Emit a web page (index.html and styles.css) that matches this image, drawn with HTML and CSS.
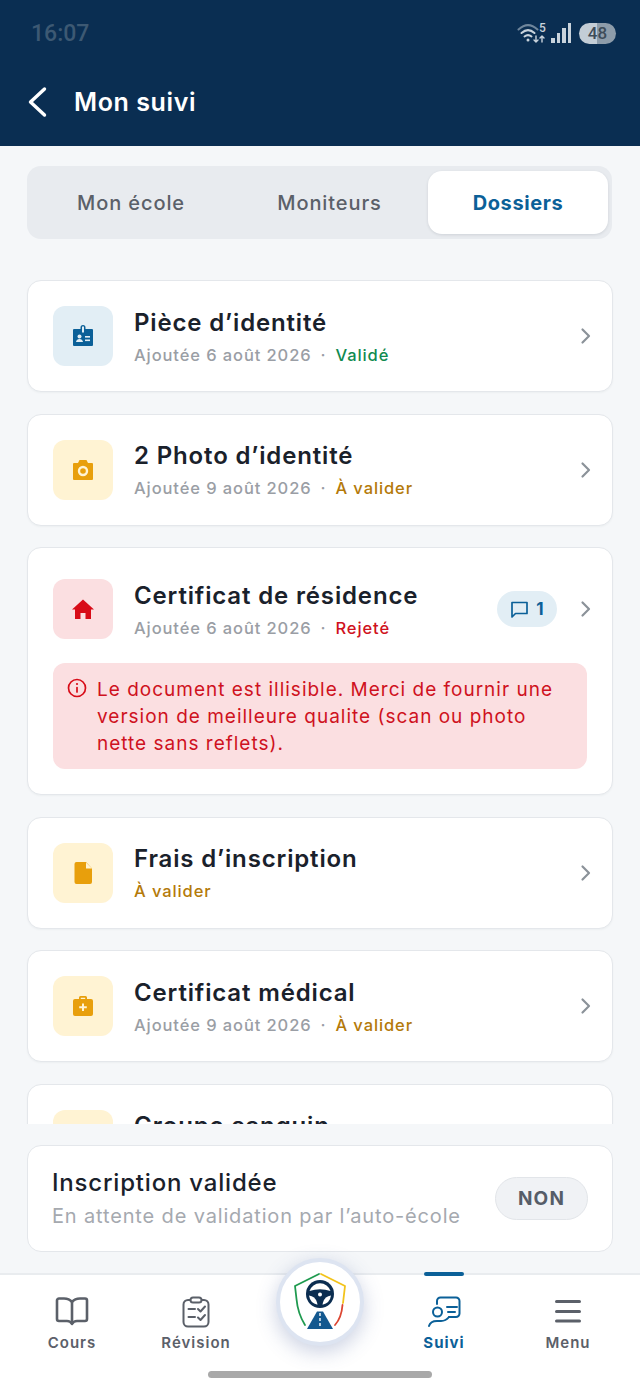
FILE: index.html
```html
<!DOCTYPE html>
<html lang="fr">
<head>
    <meta charset="UTF-8">
    <meta name="viewport" content="width=device-width, initial-scale=1.0">
    <title>Mon suivi</title>
    <link rel="stylesheet" href="styles.css">
</head>
<body>
<div class="app">
    <header class="header">
        <div class="status">
            <span class="time">16:07</span>
            <div class="status-icons">
                <svg width="30" height="22" viewBox="0 0 30 22" fill="none" stroke="#c9d3dc" stroke-linecap="round">
                    <path d="M1.500 7.500C8 1.500 14 1.500 20.500 7.500" stroke="#6f869c" stroke-width="2"/>
                    <path d="M4.500 11C9 7 13 7 17.500 11" stroke-width="2"/>
                    <path d="M7.500 14.500C10 12.500 12 12.500 14.500 14.500" stroke-width="2"/>
                    <circle cx="11" cy="18" r="1.500" fill="#c9d3dc" stroke="none"/>
                    <path d="M19 14v6M17 18l2 2 2-2M25 20v-6M23 16l2-2 2 2" stroke-width="1.400"/>
                    <text x="22" y="10" class="wifi-five">5</text>
                </svg>
                <div class="signal"><i></i><i></i><i></i><i></i></div>
                <div class="battery"><span>48</span></div>
            </div>
        </div>
        <div class="titlebar">
            <svg width="20" height="32" viewBox="0 0 20 32" fill="none" stroke="#fff" stroke-width="3.400" stroke-linecap="round" stroke-linejoin="round">
                <path d="M17.500 3L3.500 16l14 13"/>
            </svg>
            <h1>Mon suivi</h1>
        </div>
    </header>

    <div class="content">
        <nav class="tabs">
            <span class="tab">Mon école</span>
            <span class="tab">Moniteurs</span>
            <span class="tab active">Dossiers</span>
        </nav>

        <div class="list">
            <div class="card">
                <div class="row">
                    <div class="thumb thumb-blue">
                        <svg width="24" height="24" viewBox="0 0 24 24" fill="#0b6098">
                            <path d="M3 5h6.500V3.500a2.500 2.500 0 0 1 5 0V5H21a1 1 0 0 1 1 1v15a1 1 0 0 1-1 1H3a1 1 0 0 1-1-1V6a1 1 0 0 1 1-1z"/>
                            <rect x="11" y="2.500" width="2" height="6" fill="#e2eef5"/>
                            <circle cx="8.500" cy="12.500" r="2" fill="#e2eef5"/>
                            <path d="M5 18c.3-2 1.700-3 3.500-3s3.200 1 3.500 3z" fill="#e2eef5"/>
                            <rect x="14" y="12" width="5" height="1.600" fill="#e2eef5"/>
                            <rect x="14" y="15.500" width="5" height="1.600" fill="#e2eef5"/>
                        </svg>
                    </div>
                    <div class="info">
                        <h2>Pièce d’identité</h2>
                        <p class="meta">Ajoutée 6 août 2026<span class="dot">·</span><span class="ok">Validé</span></p>
                    </div>
                    <svg class="chevron" width="12" height="18" viewBox="0 0 12 18" fill="none" stroke="#8b9299" stroke-width="2.200" stroke-linecap="round" stroke-linejoin="round"><path d="M2.500 2.500L9 9l-6.500 6.500"/></svg>
                </div>
            </div>

            <div class="card">
                <div class="row">
                    <div class="thumb thumb-yellow">
                        <svg width="24" height="24" viewBox="0 0 24 24" fill="#e89f0c">
                            <path d="M3 5h4l1.500-3h7L17 5h4a1 1 0 0 1 1 1v15a1 1 0 0 1-1 1H3a1 1 0 0 1-1-1V6a1 1 0 0 1 1-1z"/>
                            <circle cx="12" cy="13" r="4" fill="none" stroke="#fff3d3" stroke-width="2.400"/>
                        </svg>
                    </div>
                    <div class="info">
                        <h2>2 Photo d’identité</h2>
                        <p class="meta">Ajoutée 9 août 2026<span class="dot">·</span><span class="wait">À valider</span></p>
                    </div>
                    <svg class="chevron" width="12" height="18" viewBox="0 0 12 18" fill="none" stroke="#8b9299" stroke-width="2.200" stroke-linecap="round" stroke-linejoin="round"><path d="M2.500 2.500L9 9l-6.500 6.500"/></svg>
                </div>
            </div>

            <div class="card card-open">
                <div class="row">
                    <div class="thumb thumb-red">
                        <svg width="24" height="24" viewBox="0 0 24 24" fill="#d80c18">
                            <path d="M12 2.500L23 12.500h-3V22h-5.500v-6h-5v6H4v-9.500H1z"/>
                        </svg>
                    </div>
                    <div class="info">
                        <h2>Certificat de résidence</h2>
                        <p class="meta">Ajoutée 6 août 2026<span class="dot">·</span><span class="ko">Rejeté</span></p>
                    </div>
                    <div class="badge">
                        <svg width="19" height="19" viewBox="0 0 19 19" fill="none" stroke="#0b6098" stroke-width="1.700" stroke-linejoin="round"><path d="M2 2.500h15v11H5.500L2 17z"/></svg>
                        <span>1</span>
                    </div>
                    <svg class="chevron" width="12" height="18" viewBox="0 0 12 18" fill="none" stroke="#8b9299" stroke-width="2.200" stroke-linecap="round" stroke-linejoin="round"><path d="M2.500 2.500L9 9l-6.500 6.500"/></svg>
                </div>
                <div class="alert">
                    <svg width="20" height="20" viewBox="0 0 20 20" fill="none" stroke="#d80c18" stroke-width="1.700" stroke-linecap="round"><circle cx="10" cy="10" r="8.500"/><path d="M10 9.500v4.500"/><path d="M10 6h.01" stroke-width="2.200"/></svg>
                    <p>Le document est illisible. Merci de fournir une version de meilleure qualite (scan ou photo nette sans reflets).</p>
                </div>
            </div>

            <div class="card">
                <div class="row">
                    <div class="thumb thumb-yellow">
                        <svg width="24" height="24" viewBox="0 0 24 24" fill="#e89f0c">
                            <path d="M5.500 1H15l6 6.500V21a2 2 0 0 1-2 2H5.500a2 2 0 0 1-2-2V3a2 2 0 0 1 2-2z"/>
                            <path d="M15 1.500v6h6z" fill="#fff3d3"/>
                        </svg>
                    </div>
                    <div class="info">
                        <h2>Frais d’inscription</h2>
                        <p class="meta"><span class="wait">À valider</span></p>
                    </div>
                    <svg class="chevron" width="12" height="18" viewBox="0 0 12 18" fill="none" stroke="#8b9299" stroke-width="2.200" stroke-linecap="round" stroke-linejoin="round"><path d="M2.500 2.500L9 9l-6.500 6.500"/></svg>
                </div>
            </div>

            <div class="card">
                <div class="row">
                    <div class="thumb thumb-yellow">
                        <svg width="24" height="24" viewBox="0 0 24 24" fill="#e89f0c">
                            <path d="M8 5V3.500A1.500 1.500 0 0 1 9.500 2h5A1.500 1.500 0 0 1 16 3.500V5h-1.800V3.800H9.800V5z"/>
                            <rect x="2" y="5" width="20" height="17" rx="2"/>
                            <path d="M12 9.500v7.500M8.200 13.200h7.600" stroke="#fff3d3" stroke-width="2"/>
                        </svg>
                    </div>
                    <div class="info">
                        <h2>Certificat médical</h2>
                        <p class="meta">Ajoutée 9 août 2026<span class="dot">·</span><span class="wait">À valider</span></p>
                    </div>
                    <svg class="chevron" width="12" height="18" viewBox="0 0 12 18" fill="none" stroke="#8b9299" stroke-width="2.200" stroke-linecap="round" stroke-linejoin="round"><path d="M2.500 2.500L9 9l-6.500 6.500"/></svg>
                </div>
            </div>

            <div class="card">
                <div class="row">
                    <div class="thumb thumb-yellow"></div>
                    <div class="info info-top">
                        <h2>Groupe sanguin</h2>
                    </div>
                </div>
            </div>
        </div>

        <div class="footer">
            <div class="summary">
                <div class="summary-text">
                    <h3>Inscription validée</h3>
                    <p>En attente de validation par l’auto-école</p>
                </div>
                <span class="pill">NON</span>
            </div>
        </div>
    </div>

    <nav class="bottom">
        <div class="item">
            <svg width="36" height="32" viewBox="0 0 36 32" fill="none" stroke="#5b6069" stroke-width="2.600" stroke-linejoin="round" stroke-linecap="round">
                <path d="M18 6C16 3.500 13 2.500 10 2.500H5a2 2 0 0 0-2 2V23a2 2 0 0 0 2 2h8c2 0 4 1 5 3 1-2 3-3 5-3h8a2 2 0 0 0 2-2V4.500a2 2 0 0 0-2-2h-5C23 2.500 20 3.500 18 6z"/>
                <path d="M18 6v21"/>
            </svg>
            <span>Cours</span>
        </div>
        <div class="item">
            <svg width="30" height="32" viewBox="0 0 30 32" fill="none" stroke="#5b6069" stroke-width="2" stroke-linecap="round" stroke-linejoin="round">
                <rect x="2.500" y="4" width="25" height="26.500" rx="4.500"/>
                <rect x="9.500" y="1.500" width="11" height="5" rx="2.500" fill="#fff"/>
                <path d="M7.500 13h6.500M7.500 21h6.500M17 13l2.500 2.500 4.500-5M17 21.500l2.500 2.500 4.500-5"/>
            </svg>
            <span>Révision</span>
        </div>
        <div class="item"></div>
        <div class="item active">
            <i class="marker"></i>
            <svg width="34" height="32" viewBox="0 0 34 32" fill="none" stroke="#0b6098" stroke-width="2" stroke-linecap="round" stroke-linejoin="round">
                <path d="M10 8V5a3.500 3.500 0 0 1 3.500-3.500H29A3.500 3.500 0 0 1 32.500 5v12.500A3.500 3.500 0 0 1 29 21h-7"/>
                <path d="M20 11h10M21 16h7"/>
                <circle cx="10.500" cy="16" r="4.500"/>
                <path d="M2 30c1-3.500 4-5 8-5h4c3 0 6-1.500 8-4"/>
            </svg>
            <span>Suivi</span>
        </div>
        <div class="item">
            <svg width="30" height="32" viewBox="0 0 30 32" fill="none" stroke="#5b6069" stroke-width="3" stroke-linecap="round">
                <path d="M3.500 5.500h23M3.500 15.500h23M3.500 25h23"/>
            </svg>
            <span>Menu</span>
        </div>
        <div class="fab">
            <svg width="60" height="60" viewBox="0 0 60 60" fill="none">
                <path d="M29 2L5 14l1.500 13c.8 9 3.500 18 8.500 26" stroke="#1f9a4f" stroke-width="1.800" stroke-linecap="round" stroke-linejoin="round"/>
                <path d="M31 2l24 12-2 17" stroke="#f2c31b" stroke-width="1.800" stroke-linecap="round" stroke-linejoin="round"/>
                <path d="M52.500 33c-.6 8-3 15-7.500 20" stroke="#dc4632" stroke-width="1.800" stroke-linecap="round"/>
                <circle cx="30" cy="22" r="14" fill="#0b2d50"/>
                <path d="M19.500 19A11 11 0 0 1 40.500 19Q30 15.500 19.500 19z" fill="#fff"/>
                <path d="M19 23.500Q25 24 27 30.500L27.500 32.700A11 11 0 0 1 19 23.500z" fill="#fff"/>
                <path d="M41 23.500Q35 24 33 30.500L32.500 32.700A11 11 0 0 0 41 23.500z" fill="#fff"/>
                <circle cx="30" cy="22.500" r="2" fill="#fff"/>
                <path d="M27 39.500h6L43 57H17z" fill="#13588f"/>
                <path d="M30 41v15" stroke="#fff" stroke-width="1.400" stroke-dasharray="3 2"/>
            </svg>
        </div>
        <i class="home-bar"></i>
    </nav>
</div>
</body>
</html>
```

FILE: styles.css
```css
*{
    margin:0;
    padding:0;
    box-sizing:border-box;
}

body{
    background:#f5f7f9;
    font-family:"Inter","Liberation Sans",sans-serif;
}

.app{
    width:640px;
    height:1387px;
    display:flex;
    flex-direction:column;
    overflow:hidden;
}

/* top */
.header{
    height:146px;
    flex:none;
    background:#0a2e52;
    padding:0 24px 0 31px;
}
.status{
    height:66px;
    display:flex;
    align-items:center;
    justify-content:space-between;
}
.time{
    font-family:"Roboto",sans-serif;
    font-size:23px;
    font-weight:500;
    color:#3d5973;
}
.status-icons{
    display:flex;
    align-items:center;
    gap:4px;
}
.wifi-five{
    font-family:"Roboto",sans-serif;
    font-size:12px;
    font-weight:500;
    fill:#c9d3dc;
    stroke:none;
}
.signal{
    display:flex;
    align-items:flex-end;
    gap:2px;
    height:20px;
    margin-right:4px;
}
.signal i{
    display:block;
    width:3.5px;
    background:#c9d3dc;
}
.signal i:nth-child(1){height:5px;}
.signal i:nth-child(2){height:10px;}
.signal i:nth-child(3){height:15px;}
.signal i:nth-child(4){height:20px;}
.battery{
    width:37px;
    height:21px;
    border-radius:11px;
    background:linear-gradient(90deg,#c3cdd6 0,#c3cdd6 48%,#8d9caa 48%);
    text-align:center;
}
.battery span{
    font-family:"Roboto",sans-serif;
    font-size:17px;
    font-weight:500;
    line-height:21px;
    color:#3e4c59;
}
.titlebar{
    display:flex;
    align-items:center;
    gap:27px;
    margin-left:-4px;
    height:72px;
}
.titlebar h1{
    font-size:25px;
    font-weight:600;
    letter-spacing:.6px;
    color:#fff;
}

.content{
    flex:1;
    display:flex;
    flex-direction:column;
    min-height:0;
    background:#f5f7f9;
}

/* tabs */
.tabs{
    flex:none;
    display:grid;
    grid-template-columns:208px 189px 1fr;
    margin:20px 28px 0 27px;
    height:73px;
    padding:5px 4px 5px 0;
    background:#e8ebef;
    border-radius:14px;
}
.tab{
    display:flex;
    align-items:center;
    justify-content:center;
    font-size:20px;
    font-weight:500;
    letter-spacing:.9px;
    color:#5b6069;
}
.tab.active{
    margin-left:4px;
    background:#fff;
    border-radius:14px;
    font-weight:700;
    letter-spacing:.6px;
    color:#0b6098;
    box-shadow:0 1px 3px rgba(30,40,60,.12);
}

/* dossiers */
.list{
    flex:1;
    min-height:0;
    overflow:hidden;
    display:flex;
    flex-direction:column;
    gap:21.5px;
    padding:41px 27px 0;
}
.card{
    flex:none;
    background:#fff;
    border:1px solid #e4e7eb;
    border-radius:14px;
    padding:25px;
    box-shadow:0 1px 2px rgba(30,40,60,.04);
}
.card-open{
    padding-top:31px;
}
.row{
    display:flex;
    align-items:center;
    height:60px;
}
.thumb{
    width:60px;
    height:60px;
    flex:none;
    display:flex;
    align-items:center;
    justify-content:center;
    border-radius:12px;
    margin-right:21px;
}
.thumb-blue{background:#e2eef5;}
.thumb-yellow{background:#fff3d3;}
.thumb-red{background:#fbdfe1;}
.info{
    flex:1;
    min-width:0;
}
.info-top{
    padding-bottom:27px;
}
.info h2{
    font-size:24px;
    font-weight:600;
    color:#1a212b;
    line-height:30px;
    letter-spacing:.85px;
    white-space:nowrap;
}
.meta{
    margin-top:7px;
    font-size:16.5px;
    font-weight:500;
    line-height:20px;
    letter-spacing:.9px;
    color:#9a9ea5;
}
.dot{
    margin:0 9px;
}
.ok{color:#0f8a50;}
.wait{color:#b47a0a;}
.ko{color:#cf1120;}
.chevron{
    flex:none;
    margin-right:-5px;
}
.badge{
    display:flex;
    align-items:center;
    justify-content:center;
    gap:7px;
    width:60px;
    height:36px;
    margin-right:23px;
    border-radius:18px;
    background:#e2eef5;
    font-size:17px;
    font-weight:700;
    color:#0b6098;
}
.alert{
    display:flex;
    gap:10px;
    margin-top:24px;
    padding:13px 20px 12px 14px;
    background:#fbdfe1;
    border-radius:12px;
}
.alert svg{
    flex:none;
    margin-top:2px;
}
.alert p{
    font-size:19px;
    line-height:27px;
    letter-spacing:1px;
    color:#cf1120;
}

/* inscription */
.footer{
    flex:none;
    padding:21px 27px;
}
.summary{
    height:107px;
    display:flex;
    align-items:center;
    justify-content:space-between;
    padding:0 24px;
    background:#fff;
    border:1px solid #e4e7eb;
    border-radius:14px;
}
.summary-text{
    padding-bottom:2px;
}
.summary h3{
    font-size:24px;
    font-weight:500;
    letter-spacing:.8px;
    color:#1a212b;
}
.summary p{
    margin-top:7px;
    font-size:20px;
    font-weight:400;
    letter-spacing:.85px;
    color:#a5a9af;
}
.pill{
    width:93px;
    height:43px;
    display:flex;
    align-items:center;
    justify-content:center;
    background:#f0f2f5;
    border:1px solid #e2e5e9;
    border-radius:22px;
    font-size:19px;
    font-weight:700;
    letter-spacing:1.2px;
    color:#565d68;
}

/* nav */
.bottom{
    position:relative;
    flex:none;
    height:114px;
    display:grid;
    grid-template-columns:144px 104px 144px 104px 144px;
    background:#fff;
    border-top:2px solid #e9ecef;
}
.item{
    position:relative;
    display:flex;
    flex-direction:column;
    align-items:center;
    padding-top:21px;
    gap:5px;
}
.item span{
    font-size:15px;
    font-weight:600;
    letter-spacing:1px;
    color:#5b6069;
}
.item.active span{
    color:#0b6098;
    font-weight:700;
}
.marker{
    position:absolute;
    top:-3px;
    left:32px;
    width:40px;
    height:4px;
    border-radius:2px;
    background:#0b6098;
}
.fab{
    position:absolute;
    top:-17px;
    left:276px;
    width:88px;
    height:88px;
    display:flex;
    align-items:center;
    justify-content:center;
    border-radius:50%;
    background:#fff;
    border:4px solid #dde4f1;
    box-shadow:0 6px 20px rgba(70,90,150,.28);
}
.home-bar{
    position:absolute;
    left:208px;
    bottom:9px;
    width:224px;
    height:7px;
    border-radius:4px;
    background:#a9a9a9;
}
```
